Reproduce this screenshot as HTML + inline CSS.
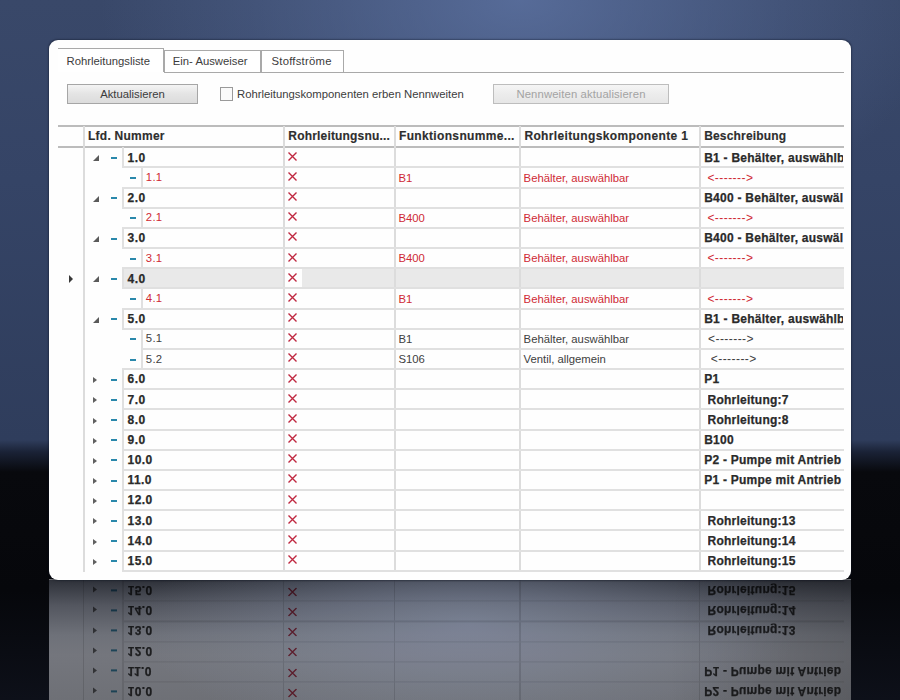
<!DOCTYPE html>
<html><head><meta charset="utf-8"><style>
*{margin:0;padding:0;box-sizing:border-box}
html,body{width:900px;height:700px;overflow:hidden}
body{position:relative;font-family:"Liberation Sans",sans-serif;
 background:
  radial-gradient(ellipse 420px 250px at 520px 0px, rgba(94,116,164,0.8), rgba(94,116,164,0.25) 65%, rgba(94,116,164,0) 100%),
  linear-gradient(to bottom,#394869 0px,#354466 180px,#2f3d5c 440px,#1a2236 452px,#08090d 472px,#06070b 590px,#0d1019 700px);}
.panel{position:absolute;left:49px;top:40px;width:802px;height:539.5px;background:#fefefe;border-radius:9px;overflow:hidden;box-shadow:0 0 1.5px 0.5px rgba(10,15,30,0.35)}
.panel div,.panel svg{position:absolute}
.tabline{height:1px;background:#a9a9a9}
.tab{border:1px solid #a9a9a9;border-bottom:none;background:#fff}
.tab.act{border-left:none;border-right:1px solid #a9a9a9}
.tab span{position:absolute;font-size:11.3px;color:#3c3c3c;white-space:nowrap;line-height:13px}
.btn{border:1px solid #a6a6a6;background:linear-gradient(#f4f4f4,#e4e4e4 50%,#dcdcdc);}
.btn span{position:absolute;left:0;right:0;top:3px;text-align:center;font-size:11.3px;color:#3c3c3c;line-height:13px}
.btn.dis{border-color:#bdbdbd;background:linear-gradient(#f5f5f5,#ececec 50%,#e6e6e6)}
.btn.dis span{color:#a3a3a3}
.chk{width:13px;height:14px;border:1px solid #9a9a9a;background:#fafafa}
.lbl{font-size:11.3px;color:#3c3c3c;white-space:nowrap;line-height:13px}
.hl{height:2px;background:#bcbcbc}
.ht{font-weight:bold;font-size:12px;color:#2e2e2e;white-space:nowrap;line-height:14px;-webkit-text-stroke:0.15px #2e2e2e}
.vl{width:2px;background:#dcdcdc}
.rl{height:2px;background:#e0e0e0}
.il{width:2px;background:#e0e0e0}
.sel{background:#e9e9e9;border-top:1px solid #d8d8d8;border-bottom:1px solid #d8d8d8}
.exp{width:0;height:0;border-left:6px solid transparent;border-bottom:6px solid #5a5a5a}
.col{width:0;height:0;border-top:3.8px solid transparent;border-bottom:3.8px solid transparent;border-left:4.8px solid #606060}
.ind{width:0;height:0;border-top:4px solid transparent;border-bottom:4px solid transparent;border-left:4.5px solid #383838}
.dash{width:6px;height:2px;background:#2a88ab}
.tn{font-size:11.3px;color:#404040;white-space:nowrap;line-height:14px;letter-spacing:0.3px}
.tn.b{font-weight:bold;font-size:12px;color:#2a2a2a;letter-spacing:0.4px;-webkit-text-stroke:0.25px #2a2a2a}
.ct{font-size:11.3px;color:#404040;white-space:nowrap;line-height:14px}
.red{color:#cf2a35}
.b{font-weight:bold;font-size:12px;color:#2a2a2a;letter-spacing:0.25px;-webkit-text-stroke:0.25px #2a2a2a}
.arr{font-size:12px;letter-spacing:0.44px}
.clip{overflow:hidden}
.refl{position:absolute;left:0;top:0;width:900px;height:700px;clip-path:inset(579.5px 49px 0 49px)}
.reflbg{position:absolute;left:49px;top:579.5px;width:802px;height:121px;
 background:
  radial-gradient(ellipse 330px 120px at 420px 45px, rgba(135,146,172,0.6), rgba(135,146,172,0)),
  linear-gradient(to right, rgba(0,0,0,0) 0px, rgba(0,0,0,0) 620px, rgba(0,0,0,0.18) 802px),
  linear-gradient(to bottom,#2e3139 0px,#53565f 25px,#6e7179 55px,#74767d 75px,#6e7076 121px)}
.reflp .rl{height:1.2px}
.reflp .vl{width:1.2px}
.reflp{box-shadow:none;transform-origin:0 535.7px;transform:scaleY(-1);mix-blend-mode:multiply;opacity:0.9}
</style></head>
<body>
<div class="refl"><div class="reflbg"></div><div class="panel reflp">
<div class="tabline" style="left:115.00px;top:32.00px;width:679.50px"></div>
<div class="tab act" style="left:8.50px;top:8.00px;width:106.50px;height:24px"><span style="left:9px;top:5.5px">Rohrleitungsliste</span></div>
<div class="tab" style="left:115.00px;top:10.00px;width:96.50px;height:22px"><span style="left:7.8px;top:4px">Ein- Ausweiser</span></div>
<div class="tab" style="left:211.50px;top:10.00px;width:83.50px;height:22px"><span style="left:10px;top:4px;letter-spacing:0.24px">Stoffströme</span></div>
<div class="btn" style="left:18.00px;top:43.50px;width:131px;height:20.5px"><span>Aktualisieren</span></div>
<div class="chk" style="left:171.00px;top:47.00px"></div>
<div class="lbl" style="left:188.00px;top:47.50px">Rohrleitungskomponenten erben Nennweiten</div>
<div class="btn dis" style="left:444.00px;top:43.50px;width:176px;height:20.5px"><span style="letter-spacing:0.12px">Nennweiten aktualisieren</span></div>
<div class="hl" style="left:8.50px;top:85.00px;width:786.00px"></div>
<div class="hl" style="left:8.50px;top:106.00px;width:786.00px"></div>
<div class="ht" style="left:39.00px;top:88.50px;letter-spacing:0.25px">Lfd. Nummer</div>
<div class="ht" style="left:239.30px;top:88.50px;letter-spacing:0.18px">Rohrleitungsnu...</div>
<div class="ht" style="left:350.00px;top:88.50px;letter-spacing:0.34px">Funktionsnumme...</div>
<div class="ht" style="left:475.40px;top:88.50px;letter-spacing:0.36px">Rohrleitungskomponente 1</div>
<div class="ht" style="left:655.20px;top:88.50px;letter-spacing:0.17px">Beschreibung</div>
<div class="sel" style="left:74.00px;top:228.12px;width:720.50px;height:20.17px"></div>
<div style="left:235.50px;top:229.12px;width:17px;height:18.67px;background:#fefefe"></div>
<div class="vl" style="left:34.00px;top:86.00px;height:445.67px"></div>
<div class="vl" style="left:234.00px;top:86.00px;height:445.67px"></div>
<div class="vl" style="left:345.30px;top:86.00px;height:445.67px"></div>
<div class="vl" style="left:470.40px;top:86.00px;height:445.67px"></div>
<div class="vl" style="left:650.00px;top:86.00px;height:445.67px"></div>
<div class="rl" style="left:73.00px;top:126.37px;width:721.50px"></div>
<div class="il" style="left:73.00px;top:107.10px;height:20.17px"></div>
<div class="exp" style="left:43.50px;top:115.40px"></div>
<div class="dash" style="left:62.20px;top:116.90px"></div>
<div class="tn b" style="left:78.60px;top:110.50px">1.0</div>
<svg class="x" style="left:239.10px;top:111.70px" width="9" height="9" viewBox="0 0 9 9"><path d="M0.5 0.5L8.5 8.5M8.5 0.5L0.5 8.5" stroke="#c02840" stroke-width="1.35"/></svg>
<div class="ct b clip" style="left:655.20px;top:110.60px;width:139.30px">B1 - Behälter, auswählb</div>
<div class="rl" style="left:73.00px;top:146.54px;width:721.50px"></div>
<div class="il" style="left:92.00px;top:127.27px;height:20.17px"></div>
<div class="dash" style="left:81.10px;top:137.07px"></div>
<div class="tn red" style="left:96.80px;top:130.07px">1.1</div>
<svg class="x" style="left:239.10px;top:131.87px" width="9" height="9" viewBox="0 0 9 9"><path d="M0.5 0.5L8.5 8.5M8.5 0.5L0.5 8.5" stroke="#c02840" stroke-width="1.35"/></svg>
<div class="ct red" style="left:349.50px;top:130.77px">B1</div>
<div class="ct red" style="left:474.60px;top:130.77px">Behälter, auswählbar</div>
<div class="ct red arr clip" style="left:658.40px;top:130.77px;width:136.10px">&lt;-------&gt;</div>
<div class="rl" style="left:73.00px;top:166.71px;width:721.50px"></div>
<div class="il" style="left:73.00px;top:147.44px;height:20.17px"></div>
<div class="exp" style="left:43.50px;top:155.74px"></div>
<div class="dash" style="left:62.20px;top:157.24px"></div>
<div class="tn b" style="left:78.60px;top:150.84px">2.0</div>
<svg class="x" style="left:239.10px;top:152.04px" width="9" height="9" viewBox="0 0 9 9"><path d="M0.5 0.5L8.5 8.5M8.5 0.5L0.5 8.5" stroke="#c02840" stroke-width="1.35"/></svg>
<div class="ct b clip" style="left:655.20px;top:150.94px;width:139.30px">B400 - Behälter, auswäl</div>
<div class="rl" style="left:73.00px;top:186.88px;width:721.50px"></div>
<div class="il" style="left:92.00px;top:167.61px;height:20.17px"></div>
<div class="dash" style="left:81.10px;top:177.41px"></div>
<div class="tn red" style="left:96.80px;top:170.41px">2.1</div>
<svg class="x" style="left:239.10px;top:172.21px" width="9" height="9" viewBox="0 0 9 9"><path d="M0.5 0.5L8.5 8.5M8.5 0.5L0.5 8.5" stroke="#c02840" stroke-width="1.35"/></svg>
<div class="ct red" style="left:349.50px;top:171.11px">B400</div>
<div class="ct red" style="left:474.60px;top:171.11px">Behälter, auswählbar</div>
<div class="ct red arr clip" style="left:658.40px;top:171.11px;width:136.10px">&lt;-------&gt;</div>
<div class="rl" style="left:73.00px;top:207.05px;width:721.50px"></div>
<div class="il" style="left:73.00px;top:187.78px;height:20.17px"></div>
<div class="exp" style="left:43.50px;top:196.08px"></div>
<div class="dash" style="left:62.20px;top:197.58px"></div>
<div class="tn b" style="left:78.60px;top:191.18px">3.0</div>
<svg class="x" style="left:239.10px;top:192.38px" width="9" height="9" viewBox="0 0 9 9"><path d="M0.5 0.5L8.5 8.5M8.5 0.5L0.5 8.5" stroke="#c02840" stroke-width="1.35"/></svg>
<div class="ct b clip" style="left:655.20px;top:191.28px;width:139.30px">B400 - Behälter, auswäl</div>
<div class="rl" style="left:73.00px;top:227.22px;width:721.50px"></div>
<div class="il" style="left:92.00px;top:207.95px;height:20.17px"></div>
<div class="dash" style="left:81.10px;top:217.75px"></div>
<div class="tn red" style="left:96.80px;top:210.75px">3.1</div>
<svg class="x" style="left:239.10px;top:212.55px" width="9" height="9" viewBox="0 0 9 9"><path d="M0.5 0.5L8.5 8.5M8.5 0.5L0.5 8.5" stroke="#c02840" stroke-width="1.35"/></svg>
<div class="ct red" style="left:349.50px;top:211.45px">B400</div>
<div class="ct red" style="left:474.60px;top:211.45px">Behälter, auswählbar</div>
<div class="ct red arr clip" style="left:658.40px;top:211.45px;width:136.10px">&lt;-------&gt;</div>
<div class="rl" style="left:73.00px;top:247.39px;width:721.50px"></div>
<div class="il" style="left:73.00px;top:228.12px;height:20.17px"></div>
<div class="exp" style="left:43.50px;top:236.42px"></div>
<div class="dash" style="left:62.20px;top:237.92px"></div>
<div class="tn b" style="left:78.60px;top:231.52px">4.0</div>
<svg class="x" style="left:239.10px;top:232.72px" width="9" height="9" viewBox="0 0 9 9"><path d="M0.5 0.5L8.5 8.5M8.5 0.5L0.5 8.5" stroke="#c02840" stroke-width="1.35"/></svg>
<div class="rl" style="left:73.00px;top:267.56px;width:721.50px"></div>
<div class="il" style="left:92.00px;top:248.29px;height:20.17px"></div>
<div class="dash" style="left:81.10px;top:258.09px"></div>
<div class="tn red" style="left:96.80px;top:251.09px">4.1</div>
<svg class="x" style="left:239.10px;top:252.89px" width="9" height="9" viewBox="0 0 9 9"><path d="M0.5 0.5L8.5 8.5M8.5 0.5L0.5 8.5" stroke="#c02840" stroke-width="1.35"/></svg>
<div class="ct red" style="left:349.50px;top:251.79px">B1</div>
<div class="ct red" style="left:474.60px;top:251.79px">Behälter, auswählbar</div>
<div class="ct red arr clip" style="left:658.40px;top:251.79px;width:136.10px">&lt;-------&gt;</div>
<div class="rl" style="left:73.00px;top:287.73px;width:721.50px"></div>
<div class="il" style="left:73.00px;top:268.46px;height:20.17px"></div>
<div class="exp" style="left:43.50px;top:276.76px"></div>
<div class="dash" style="left:62.20px;top:278.26px"></div>
<div class="tn b" style="left:78.60px;top:271.86px">5.0</div>
<svg class="x" style="left:239.10px;top:273.06px" width="9" height="9" viewBox="0 0 9 9"><path d="M0.5 0.5L8.5 8.5M8.5 0.5L0.5 8.5" stroke="#c02840" stroke-width="1.35"/></svg>
<div class="ct b clip" style="left:655.20px;top:271.96px;width:139.30px">B1 - Behälter, auswählb</div>
<div class="rl" style="left:92.00px;top:307.90px;width:702.50px"></div>
<div class="il" style="left:92.00px;top:288.63px;height:20.17px"></div>
<div class="dash" style="left:81.10px;top:298.43px"></div>
<div class="tn " style="left:96.80px;top:291.43px">5.1</div>
<svg class="x" style="left:239.10px;top:293.23px" width="9" height="9" viewBox="0 0 9 9"><path d="M0.5 0.5L8.5 8.5M8.5 0.5L0.5 8.5" stroke="#c02840" stroke-width="1.35"/></svg>
<div class="ct " style="left:349.50px;top:292.13px">B1</div>
<div class="ct " style="left:474.60px;top:292.13px">Behälter, auswählbar</div>
<div class="ct  arr clip" style="left:659.00px;top:292.13px;width:135.50px">&lt;-------&gt;</div>
<div class="rl" style="left:73.00px;top:328.07px;width:721.50px"></div>
<div class="il" style="left:92.00px;top:308.80px;height:20.17px"></div>
<div class="dash" style="left:81.10px;top:318.60px"></div>
<div class="tn " style="left:96.80px;top:311.60px">5.2</div>
<svg class="x" style="left:239.10px;top:313.40px" width="9" height="9" viewBox="0 0 9 9"><path d="M0.5 0.5L8.5 8.5M8.5 0.5L0.5 8.5" stroke="#c02840" stroke-width="1.35"/></svg>
<div class="ct " style="left:349.50px;top:312.30px">S106</div>
<div class="ct " style="left:474.60px;top:312.30px">Ventil, allgemein</div>
<div class="ct  arr clip" style="left:661.80px;top:312.30px;width:132.70px">&lt;-------&gt;</div>
<div class="rl" style="left:73.00px;top:348.24px;width:721.50px"></div>
<div class="il" style="left:73.00px;top:328.97px;height:20.17px"></div>
<div class="col" style="left:44.00px;top:337.17px"></div>
<div class="dash" style="left:62.20px;top:338.77px"></div>
<div class="tn b" style="left:78.60px;top:332.37px">6.0</div>
<svg class="x" style="left:239.10px;top:333.57px" width="9" height="9" viewBox="0 0 9 9"><path d="M0.5 0.5L8.5 8.5M8.5 0.5L0.5 8.5" stroke="#c02840" stroke-width="1.35"/></svg>
<div class="ct b clip" style="left:655.20px;top:332.47px;width:139.30px">P1</div>
<div class="rl" style="left:73.00px;top:368.41px;width:721.50px"></div>
<div class="il" style="left:73.00px;top:349.14px;height:20.17px"></div>
<div class="col" style="left:44.00px;top:357.34px"></div>
<div class="dash" style="left:62.20px;top:358.94px"></div>
<div class="tn b" style="left:78.60px;top:352.54px">7.0</div>
<svg class="x" style="left:239.10px;top:353.74px" width="9" height="9" viewBox="0 0 9 9"><path d="M0.5 0.5L8.5 8.5M8.5 0.5L0.5 8.5" stroke="#c02840" stroke-width="1.35"/></svg>
<div class="ct b clip" style="left:658.50px;top:352.64px;width:136.00px">Rohrleitung:7</div>
<div class="rl" style="left:73.00px;top:388.58px;width:721.50px"></div>
<div class="il" style="left:73.00px;top:369.31px;height:20.17px"></div>
<div class="col" style="left:44.00px;top:377.51px"></div>
<div class="dash" style="left:62.20px;top:379.11px"></div>
<div class="tn b" style="left:78.60px;top:372.71px">8.0</div>
<svg class="x" style="left:239.10px;top:373.91px" width="9" height="9" viewBox="0 0 9 9"><path d="M0.5 0.5L8.5 8.5M8.5 0.5L0.5 8.5" stroke="#c02840" stroke-width="1.35"/></svg>
<div class="ct b clip" style="left:658.50px;top:372.81px;width:136.00px">Rohrleitung:8</div>
<div class="rl" style="left:73.00px;top:408.75px;width:721.50px"></div>
<div class="il" style="left:73.00px;top:389.48px;height:20.17px"></div>
<div class="col" style="left:44.00px;top:397.68px"></div>
<div class="dash" style="left:62.20px;top:399.28px"></div>
<div class="tn b" style="left:78.60px;top:392.88px">9.0</div>
<svg class="x" style="left:239.10px;top:394.08px" width="9" height="9" viewBox="0 0 9 9"><path d="M0.5 0.5L8.5 8.5M8.5 0.5L0.5 8.5" stroke="#c02840" stroke-width="1.35"/></svg>
<div class="ct b clip" style="left:655.20px;top:392.98px;width:139.30px">B100</div>
<div class="rl" style="left:73.00px;top:428.92px;width:721.50px"></div>
<div class="il" style="left:73.00px;top:409.65px;height:20.17px"></div>
<div class="col" style="left:44.00px;top:417.85px"></div>
<div class="dash" style="left:62.20px;top:419.45px"></div>
<div class="tn b" style="left:78.60px;top:413.05px">10.0</div>
<svg class="x" style="left:239.10px;top:414.25px" width="9" height="9" viewBox="0 0 9 9"><path d="M0.5 0.5L8.5 8.5M8.5 0.5L0.5 8.5" stroke="#c02840" stroke-width="1.35"/></svg>
<div class="ct b clip" style="left:655.20px;top:413.15px;width:139.30px">P2 - Pumpe mit Antrieb</div>
<div class="rl" style="left:73.00px;top:449.09px;width:721.50px"></div>
<div class="il" style="left:73.00px;top:429.82px;height:20.17px"></div>
<div class="col" style="left:44.00px;top:438.02px"></div>
<div class="dash" style="left:62.20px;top:439.62px"></div>
<div class="tn b" style="left:78.60px;top:433.22px">11.0</div>
<svg class="x" style="left:239.10px;top:434.42px" width="9" height="9" viewBox="0 0 9 9"><path d="M0.5 0.5L8.5 8.5M8.5 0.5L0.5 8.5" stroke="#c02840" stroke-width="1.35"/></svg>
<div class="ct b clip" style="left:655.20px;top:433.32px;width:139.30px">P1 - Pumpe mit Antrieb</div>
<div class="rl" style="left:73.00px;top:469.26px;width:721.50px"></div>
<div class="il" style="left:73.00px;top:449.99px;height:20.17px"></div>
<div class="col" style="left:44.00px;top:458.19px"></div>
<div class="dash" style="left:62.20px;top:459.79px"></div>
<div class="tn b" style="left:78.60px;top:453.39px">12.0</div>
<svg class="x" style="left:239.10px;top:454.59px" width="9" height="9" viewBox="0 0 9 9"><path d="M0.5 0.5L8.5 8.5M8.5 0.5L0.5 8.5" stroke="#c02840" stroke-width="1.35"/></svg>
<div class="rl" style="left:73.00px;top:489.43px;width:721.50px"></div>
<div class="il" style="left:73.00px;top:470.16px;height:20.17px"></div>
<div class="col" style="left:44.00px;top:478.36px"></div>
<div class="dash" style="left:62.20px;top:479.96px"></div>
<div class="tn b" style="left:78.60px;top:473.56px">13.0</div>
<svg class="x" style="left:239.10px;top:474.76px" width="9" height="9" viewBox="0 0 9 9"><path d="M0.5 0.5L8.5 8.5M8.5 0.5L0.5 8.5" stroke="#c02840" stroke-width="1.35"/></svg>
<div class="ct b clip" style="left:658.50px;top:473.66px;width:136.00px">Rohrleitung:13</div>
<div class="rl" style="left:73.00px;top:509.60px;width:721.50px"></div>
<div class="il" style="left:73.00px;top:490.33px;height:20.17px"></div>
<div class="col" style="left:44.00px;top:498.53px"></div>
<div class="dash" style="left:62.20px;top:500.13px"></div>
<div class="tn b" style="left:78.60px;top:493.73px">14.0</div>
<svg class="x" style="left:239.10px;top:494.93px" width="9" height="9" viewBox="0 0 9 9"><path d="M0.5 0.5L8.5 8.5M8.5 0.5L0.5 8.5" stroke="#c02840" stroke-width="1.35"/></svg>
<div class="ct b clip" style="left:658.50px;top:493.83px;width:136.00px">Rohrleitung:14</div>
<div class="rl" style="left:73.00px;top:529.77px;width:721.50px"></div>
<div class="il" style="left:73.00px;top:510.50px;height:20.17px"></div>
<div class="col" style="left:44.00px;top:518.70px"></div>
<div class="dash" style="left:62.20px;top:520.30px"></div>
<div class="tn b" style="left:78.60px;top:513.90px">15.0</div>
<svg class="x" style="left:239.10px;top:515.10px" width="9" height="9" viewBox="0 0 9 9"><path d="M0.5 0.5L8.5 8.5M8.5 0.5L0.5 8.5" stroke="#c02840" stroke-width="1.35"/></svg>
<div class="ct b clip" style="left:658.50px;top:514.00px;width:136.00px">Rohrleitung:15</div>
<div class="ind" style="left:19.80px;top:234.72px"></div>
</div></div>
<div class="panel">
<div class="tabline" style="left:115.00px;top:32.00px;width:679.50px"></div>
<div class="tab act" style="left:8.50px;top:8.00px;width:106.50px;height:24px"><span style="left:9px;top:5.5px">Rohrleitungsliste</span></div>
<div class="tab" style="left:115.00px;top:10.00px;width:96.50px;height:22px"><span style="left:7.8px;top:4px">Ein- Ausweiser</span></div>
<div class="tab" style="left:211.50px;top:10.00px;width:83.50px;height:22px"><span style="left:10px;top:4px;letter-spacing:0.24px">Stoffströme</span></div>
<div class="btn" style="left:18.00px;top:43.50px;width:131px;height:20.5px"><span>Aktualisieren</span></div>
<div class="chk" style="left:171.00px;top:47.00px"></div>
<div class="lbl" style="left:188.00px;top:47.50px">Rohrleitungskomponenten erben Nennweiten</div>
<div class="btn dis" style="left:444.00px;top:43.50px;width:176px;height:20.5px"><span style="letter-spacing:0.12px">Nennweiten aktualisieren</span></div>
<div class="hl" style="left:8.50px;top:85.00px;width:786.00px"></div>
<div class="hl" style="left:8.50px;top:106.00px;width:786.00px"></div>
<div class="ht" style="left:39.00px;top:88.50px;letter-spacing:0.25px">Lfd. Nummer</div>
<div class="ht" style="left:239.30px;top:88.50px;letter-spacing:0.18px">Rohrleitungsnu...</div>
<div class="ht" style="left:350.00px;top:88.50px;letter-spacing:0.34px">Funktionsnumme...</div>
<div class="ht" style="left:475.40px;top:88.50px;letter-spacing:0.36px">Rohrleitungskomponente 1</div>
<div class="ht" style="left:655.20px;top:88.50px;letter-spacing:0.17px">Beschreibung</div>
<div class="sel" style="left:74.00px;top:228.12px;width:720.50px;height:20.17px"></div>
<div style="left:235.50px;top:229.12px;width:17px;height:18.67px;background:#fefefe"></div>
<div class="vl" style="left:34.00px;top:86.00px;height:445.67px"></div>
<div class="vl" style="left:234.00px;top:86.00px;height:445.67px"></div>
<div class="vl" style="left:345.30px;top:86.00px;height:445.67px"></div>
<div class="vl" style="left:470.40px;top:86.00px;height:445.67px"></div>
<div class="vl" style="left:650.00px;top:86.00px;height:445.67px"></div>
<div class="rl" style="left:73.00px;top:126.37px;width:721.50px"></div>
<div class="il" style="left:73.00px;top:107.10px;height:20.17px"></div>
<div class="exp" style="left:43.50px;top:115.40px"></div>
<div class="dash" style="left:62.20px;top:116.90px"></div>
<div class="tn b" style="left:78.60px;top:110.50px">1.0</div>
<svg class="x" style="left:239.10px;top:111.70px" width="9" height="9" viewBox="0 0 9 9"><path d="M0.5 0.5L8.5 8.5M8.5 0.5L0.5 8.5" stroke="#c02840" stroke-width="1.35"/></svg>
<div class="ct b clip" style="left:655.20px;top:110.60px;width:139.30px">B1 - Behälter, auswählb</div>
<div class="rl" style="left:73.00px;top:146.54px;width:721.50px"></div>
<div class="il" style="left:92.00px;top:127.27px;height:20.17px"></div>
<div class="dash" style="left:81.10px;top:137.07px"></div>
<div class="tn red" style="left:96.80px;top:130.07px">1.1</div>
<svg class="x" style="left:239.10px;top:131.87px" width="9" height="9" viewBox="0 0 9 9"><path d="M0.5 0.5L8.5 8.5M8.5 0.5L0.5 8.5" stroke="#c02840" stroke-width="1.35"/></svg>
<div class="ct red" style="left:349.50px;top:130.77px">B1</div>
<div class="ct red" style="left:474.60px;top:130.77px">Behälter, auswählbar</div>
<div class="ct red arr clip" style="left:658.40px;top:130.77px;width:136.10px">&lt;-------&gt;</div>
<div class="rl" style="left:73.00px;top:166.71px;width:721.50px"></div>
<div class="il" style="left:73.00px;top:147.44px;height:20.17px"></div>
<div class="exp" style="left:43.50px;top:155.74px"></div>
<div class="dash" style="left:62.20px;top:157.24px"></div>
<div class="tn b" style="left:78.60px;top:150.84px">2.0</div>
<svg class="x" style="left:239.10px;top:152.04px" width="9" height="9" viewBox="0 0 9 9"><path d="M0.5 0.5L8.5 8.5M8.5 0.5L0.5 8.5" stroke="#c02840" stroke-width="1.35"/></svg>
<div class="ct b clip" style="left:655.20px;top:150.94px;width:139.30px">B400 - Behälter, auswäl</div>
<div class="rl" style="left:73.00px;top:186.88px;width:721.50px"></div>
<div class="il" style="left:92.00px;top:167.61px;height:20.17px"></div>
<div class="dash" style="left:81.10px;top:177.41px"></div>
<div class="tn red" style="left:96.80px;top:170.41px">2.1</div>
<svg class="x" style="left:239.10px;top:172.21px" width="9" height="9" viewBox="0 0 9 9"><path d="M0.5 0.5L8.5 8.5M8.5 0.5L0.5 8.5" stroke="#c02840" stroke-width="1.35"/></svg>
<div class="ct red" style="left:349.50px;top:171.11px">B400</div>
<div class="ct red" style="left:474.60px;top:171.11px">Behälter, auswählbar</div>
<div class="ct red arr clip" style="left:658.40px;top:171.11px;width:136.10px">&lt;-------&gt;</div>
<div class="rl" style="left:73.00px;top:207.05px;width:721.50px"></div>
<div class="il" style="left:73.00px;top:187.78px;height:20.17px"></div>
<div class="exp" style="left:43.50px;top:196.08px"></div>
<div class="dash" style="left:62.20px;top:197.58px"></div>
<div class="tn b" style="left:78.60px;top:191.18px">3.0</div>
<svg class="x" style="left:239.10px;top:192.38px" width="9" height="9" viewBox="0 0 9 9"><path d="M0.5 0.5L8.5 8.5M8.5 0.5L0.5 8.5" stroke="#c02840" stroke-width="1.35"/></svg>
<div class="ct b clip" style="left:655.20px;top:191.28px;width:139.30px">B400 - Behälter, auswäl</div>
<div class="rl" style="left:73.00px;top:227.22px;width:721.50px"></div>
<div class="il" style="left:92.00px;top:207.95px;height:20.17px"></div>
<div class="dash" style="left:81.10px;top:217.75px"></div>
<div class="tn red" style="left:96.80px;top:210.75px">3.1</div>
<svg class="x" style="left:239.10px;top:212.55px" width="9" height="9" viewBox="0 0 9 9"><path d="M0.5 0.5L8.5 8.5M8.5 0.5L0.5 8.5" stroke="#c02840" stroke-width="1.35"/></svg>
<div class="ct red" style="left:349.50px;top:211.45px">B400</div>
<div class="ct red" style="left:474.60px;top:211.45px">Behälter, auswählbar</div>
<div class="ct red arr clip" style="left:658.40px;top:211.45px;width:136.10px">&lt;-------&gt;</div>
<div class="rl" style="left:73.00px;top:247.39px;width:721.50px"></div>
<div class="il" style="left:73.00px;top:228.12px;height:20.17px"></div>
<div class="exp" style="left:43.50px;top:236.42px"></div>
<div class="dash" style="left:62.20px;top:237.92px"></div>
<div class="tn b" style="left:78.60px;top:231.52px">4.0</div>
<svg class="x" style="left:239.10px;top:232.72px" width="9" height="9" viewBox="0 0 9 9"><path d="M0.5 0.5L8.5 8.5M8.5 0.5L0.5 8.5" stroke="#c02840" stroke-width="1.35"/></svg>
<div class="rl" style="left:73.00px;top:267.56px;width:721.50px"></div>
<div class="il" style="left:92.00px;top:248.29px;height:20.17px"></div>
<div class="dash" style="left:81.10px;top:258.09px"></div>
<div class="tn red" style="left:96.80px;top:251.09px">4.1</div>
<svg class="x" style="left:239.10px;top:252.89px" width="9" height="9" viewBox="0 0 9 9"><path d="M0.5 0.5L8.5 8.5M8.5 0.5L0.5 8.5" stroke="#c02840" stroke-width="1.35"/></svg>
<div class="ct red" style="left:349.50px;top:251.79px">B1</div>
<div class="ct red" style="left:474.60px;top:251.79px">Behälter, auswählbar</div>
<div class="ct red arr clip" style="left:658.40px;top:251.79px;width:136.10px">&lt;-------&gt;</div>
<div class="rl" style="left:73.00px;top:287.73px;width:721.50px"></div>
<div class="il" style="left:73.00px;top:268.46px;height:20.17px"></div>
<div class="exp" style="left:43.50px;top:276.76px"></div>
<div class="dash" style="left:62.20px;top:278.26px"></div>
<div class="tn b" style="left:78.60px;top:271.86px">5.0</div>
<svg class="x" style="left:239.10px;top:273.06px" width="9" height="9" viewBox="0 0 9 9"><path d="M0.5 0.5L8.5 8.5M8.5 0.5L0.5 8.5" stroke="#c02840" stroke-width="1.35"/></svg>
<div class="ct b clip" style="left:655.20px;top:271.96px;width:139.30px">B1 - Behälter, auswählb</div>
<div class="rl" style="left:92.00px;top:307.90px;width:702.50px"></div>
<div class="il" style="left:92.00px;top:288.63px;height:20.17px"></div>
<div class="dash" style="left:81.10px;top:298.43px"></div>
<div class="tn " style="left:96.80px;top:291.43px">5.1</div>
<svg class="x" style="left:239.10px;top:293.23px" width="9" height="9" viewBox="0 0 9 9"><path d="M0.5 0.5L8.5 8.5M8.5 0.5L0.5 8.5" stroke="#c02840" stroke-width="1.35"/></svg>
<div class="ct " style="left:349.50px;top:292.13px">B1</div>
<div class="ct " style="left:474.60px;top:292.13px">Behälter, auswählbar</div>
<div class="ct  arr clip" style="left:659.00px;top:292.13px;width:135.50px">&lt;-------&gt;</div>
<div class="rl" style="left:73.00px;top:328.07px;width:721.50px"></div>
<div class="il" style="left:92.00px;top:308.80px;height:20.17px"></div>
<div class="dash" style="left:81.10px;top:318.60px"></div>
<div class="tn " style="left:96.80px;top:311.60px">5.2</div>
<svg class="x" style="left:239.10px;top:313.40px" width="9" height="9" viewBox="0 0 9 9"><path d="M0.5 0.5L8.5 8.5M8.5 0.5L0.5 8.5" stroke="#c02840" stroke-width="1.35"/></svg>
<div class="ct " style="left:349.50px;top:312.30px">S106</div>
<div class="ct " style="left:474.60px;top:312.30px">Ventil, allgemein</div>
<div class="ct  arr clip" style="left:661.80px;top:312.30px;width:132.70px">&lt;-------&gt;</div>
<div class="rl" style="left:73.00px;top:348.24px;width:721.50px"></div>
<div class="il" style="left:73.00px;top:328.97px;height:20.17px"></div>
<div class="col" style="left:44.00px;top:337.17px"></div>
<div class="dash" style="left:62.20px;top:338.77px"></div>
<div class="tn b" style="left:78.60px;top:332.37px">6.0</div>
<svg class="x" style="left:239.10px;top:333.57px" width="9" height="9" viewBox="0 0 9 9"><path d="M0.5 0.5L8.5 8.5M8.5 0.5L0.5 8.5" stroke="#c02840" stroke-width="1.35"/></svg>
<div class="ct b clip" style="left:655.20px;top:332.47px;width:139.30px">P1</div>
<div class="rl" style="left:73.00px;top:368.41px;width:721.50px"></div>
<div class="il" style="left:73.00px;top:349.14px;height:20.17px"></div>
<div class="col" style="left:44.00px;top:357.34px"></div>
<div class="dash" style="left:62.20px;top:358.94px"></div>
<div class="tn b" style="left:78.60px;top:352.54px">7.0</div>
<svg class="x" style="left:239.10px;top:353.74px" width="9" height="9" viewBox="0 0 9 9"><path d="M0.5 0.5L8.5 8.5M8.5 0.5L0.5 8.5" stroke="#c02840" stroke-width="1.35"/></svg>
<div class="ct b clip" style="left:658.50px;top:352.64px;width:136.00px">Rohrleitung:7</div>
<div class="rl" style="left:73.00px;top:388.58px;width:721.50px"></div>
<div class="il" style="left:73.00px;top:369.31px;height:20.17px"></div>
<div class="col" style="left:44.00px;top:377.51px"></div>
<div class="dash" style="left:62.20px;top:379.11px"></div>
<div class="tn b" style="left:78.60px;top:372.71px">8.0</div>
<svg class="x" style="left:239.10px;top:373.91px" width="9" height="9" viewBox="0 0 9 9"><path d="M0.5 0.5L8.5 8.5M8.5 0.5L0.5 8.5" stroke="#c02840" stroke-width="1.35"/></svg>
<div class="ct b clip" style="left:658.50px;top:372.81px;width:136.00px">Rohrleitung:8</div>
<div class="rl" style="left:73.00px;top:408.75px;width:721.50px"></div>
<div class="il" style="left:73.00px;top:389.48px;height:20.17px"></div>
<div class="col" style="left:44.00px;top:397.68px"></div>
<div class="dash" style="left:62.20px;top:399.28px"></div>
<div class="tn b" style="left:78.60px;top:392.88px">9.0</div>
<svg class="x" style="left:239.10px;top:394.08px" width="9" height="9" viewBox="0 0 9 9"><path d="M0.5 0.5L8.5 8.5M8.5 0.5L0.5 8.5" stroke="#c02840" stroke-width="1.35"/></svg>
<div class="ct b clip" style="left:655.20px;top:392.98px;width:139.30px">B100</div>
<div class="rl" style="left:73.00px;top:428.92px;width:721.50px"></div>
<div class="il" style="left:73.00px;top:409.65px;height:20.17px"></div>
<div class="col" style="left:44.00px;top:417.85px"></div>
<div class="dash" style="left:62.20px;top:419.45px"></div>
<div class="tn b" style="left:78.60px;top:413.05px">10.0</div>
<svg class="x" style="left:239.10px;top:414.25px" width="9" height="9" viewBox="0 0 9 9"><path d="M0.5 0.5L8.5 8.5M8.5 0.5L0.5 8.5" stroke="#c02840" stroke-width="1.35"/></svg>
<div class="ct b clip" style="left:655.20px;top:413.15px;width:139.30px">P2 - Pumpe mit Antrieb</div>
<div class="rl" style="left:73.00px;top:449.09px;width:721.50px"></div>
<div class="il" style="left:73.00px;top:429.82px;height:20.17px"></div>
<div class="col" style="left:44.00px;top:438.02px"></div>
<div class="dash" style="left:62.20px;top:439.62px"></div>
<div class="tn b" style="left:78.60px;top:433.22px">11.0</div>
<svg class="x" style="left:239.10px;top:434.42px" width="9" height="9" viewBox="0 0 9 9"><path d="M0.5 0.5L8.5 8.5M8.5 0.5L0.5 8.5" stroke="#c02840" stroke-width="1.35"/></svg>
<div class="ct b clip" style="left:655.20px;top:433.32px;width:139.30px">P1 - Pumpe mit Antrieb</div>
<div class="rl" style="left:73.00px;top:469.26px;width:721.50px"></div>
<div class="il" style="left:73.00px;top:449.99px;height:20.17px"></div>
<div class="col" style="left:44.00px;top:458.19px"></div>
<div class="dash" style="left:62.20px;top:459.79px"></div>
<div class="tn b" style="left:78.60px;top:453.39px">12.0</div>
<svg class="x" style="left:239.10px;top:454.59px" width="9" height="9" viewBox="0 0 9 9"><path d="M0.5 0.5L8.5 8.5M8.5 0.5L0.5 8.5" stroke="#c02840" stroke-width="1.35"/></svg>
<div class="rl" style="left:73.00px;top:489.43px;width:721.50px"></div>
<div class="il" style="left:73.00px;top:470.16px;height:20.17px"></div>
<div class="col" style="left:44.00px;top:478.36px"></div>
<div class="dash" style="left:62.20px;top:479.96px"></div>
<div class="tn b" style="left:78.60px;top:473.56px">13.0</div>
<svg class="x" style="left:239.10px;top:474.76px" width="9" height="9" viewBox="0 0 9 9"><path d="M0.5 0.5L8.5 8.5M8.5 0.5L0.5 8.5" stroke="#c02840" stroke-width="1.35"/></svg>
<div class="ct b clip" style="left:658.50px;top:473.66px;width:136.00px">Rohrleitung:13</div>
<div class="rl" style="left:73.00px;top:509.60px;width:721.50px"></div>
<div class="il" style="left:73.00px;top:490.33px;height:20.17px"></div>
<div class="col" style="left:44.00px;top:498.53px"></div>
<div class="dash" style="left:62.20px;top:500.13px"></div>
<div class="tn b" style="left:78.60px;top:493.73px">14.0</div>
<svg class="x" style="left:239.10px;top:494.93px" width="9" height="9" viewBox="0 0 9 9"><path d="M0.5 0.5L8.5 8.5M8.5 0.5L0.5 8.5" stroke="#c02840" stroke-width="1.35"/></svg>
<div class="ct b clip" style="left:658.50px;top:493.83px;width:136.00px">Rohrleitung:14</div>
<div class="rl" style="left:73.00px;top:529.77px;width:721.50px"></div>
<div class="il" style="left:73.00px;top:510.50px;height:20.17px"></div>
<div class="col" style="left:44.00px;top:518.70px"></div>
<div class="dash" style="left:62.20px;top:520.30px"></div>
<div class="tn b" style="left:78.60px;top:513.90px">15.0</div>
<svg class="x" style="left:239.10px;top:515.10px" width="9" height="9" viewBox="0 0 9 9"><path d="M0.5 0.5L8.5 8.5M8.5 0.5L0.5 8.5" stroke="#c02840" stroke-width="1.35"/></svg>
<div class="ct b clip" style="left:658.50px;top:514.00px;width:136.00px">Rohrleitung:15</div>
<div class="ind" style="left:19.80px;top:234.72px"></div>
</div>
</body></html>
